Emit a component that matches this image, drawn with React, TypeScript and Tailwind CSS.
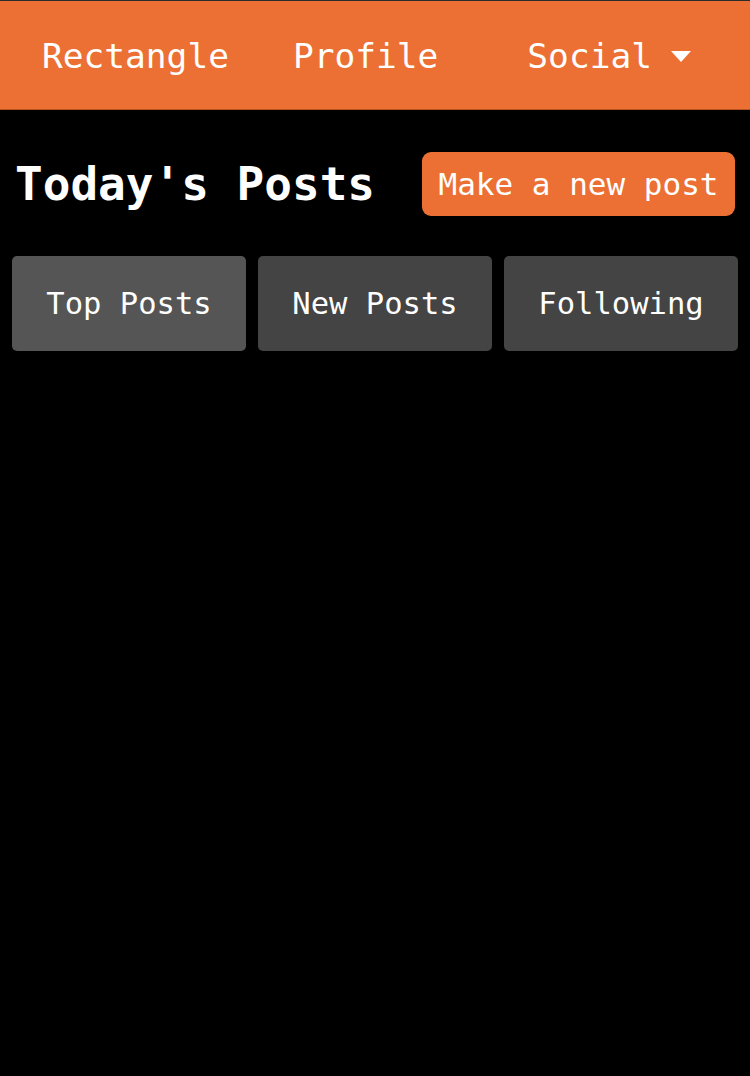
import React from "react";

const mono = { fontFamily: '"DejaVu Sans Mono", monospace' };

export default function App() {
  return (
    <div className="min-h-[1076px] bg-black text-white" style={mono}>
      <div className="border-t border-[#2b2b2b]">
        <nav className="flex h-[109px] items-center bg-[#ec7033] border-b border-[#b9531f] pt-[3px] text-[34.5px]">
          <span className="ml-[42px]">Rectangle</span>
          <span className="ml-[64px]">Profile</span>
          <span className="ml-[89px] flex items-center">
            Social
            <svg className="ml-[19px]" width="20" height="11" viewBox="0 0 20 11">
              <path d="M0 0 H20 L10 11 Z" fill="white" />
            </svg>
          </span>
        </nav>
      </div>
      <div className="flex items-center justify-between pl-[15px] pr-[15px] pt-[42px]">
        <h1 className="text-[46px] font-bold leading-none">Today's Posts</h1>
        <button className="h-[64px] w-[313px] rounded-[9px] bg-[#ec7033] text-[31px] text-white">
          Make a new post
        </button>
      </div>
      <div className="mt-[40px] grid grid-cols-3 gap-[12px] px-[12px]">
        <button className="h-[95px] rounded-[5px] bg-[#555555] text-[30.5px]">Top Posts</button>
        <button className="h-[95px] rounded-[5px] bg-[#444444] text-[30.5px]">New Posts</button>
        <button className="h-[95px] rounded-[5px] bg-[#444444] text-[30.5px]">Following</button>
      </div>
    </div>
  );
}
